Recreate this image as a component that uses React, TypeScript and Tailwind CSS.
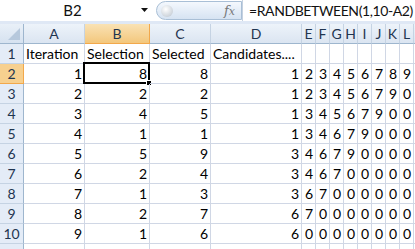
const cols = ["A", "B", "C", "D", "E", "F", "G", "H", "I", "J", "K", "L", ""];

const widths = [
  "w-[61px]",
  "w-[65px]",
  "w-[61px]",
  "w-[91px]",
  "w-[14px]",
  "w-[14px]",
  "w-[14px]",
  "w-[14px]",
  "w-[14px]",
  "w-[14px]",
  "w-[14px]",
  "w-[14px]",
  "w-[14px]",
];

const rows: (string | number)[][] = [
  ["Iteration", "Selection", "Selected", "Candidates....", "", "", "", "", "", "", "", "", ""],
  [1, 8, 8, 1, 2, 3, 4, 5, 6, 7, 8, 9, ""],
  [2, 2, 2, 1, 2, 3, 4, 5, 6, 7, 9, 0, ""],
  [3, 4, 5, 1, 3, 4, 5, 6, 7, 9, 0, 0, ""],
  [4, 1, 1, 1, 3, 4, 6, 7, 9, 0, 0, 0, ""],
  [5, 5, 9, 3, 4, 6, 7, 9, 0, 0, 0, 0, ""],
  [6, 2, 4, 3, 4, 6, 7, 0, 0, 0, 0, 0, ""],
  [7, 1, 3, 3, 6, 7, 0, 0, 0, 0, 0, 0, ""],
  [8, 2, 7, 6, 7, 0, 0, 0, 0, 0, 0, 0, ""],
  [9, 1, 6, 6, 0, 0, 0, 0, 0, 0, 0, 0, ""],
  ["", "", "", "", "", "", "", "", "", "", "", "", ""],
];

export default function App() {
  return (
    <div className="h-[249px] w-[415px] overflow-hidden bg-[#dfe8f5] font-['Lato','Open_Sans',sans-serif] text-[14px] leading-none text-black">
      {/* formula bar */}
      <div className="flex h-[21px] items-stretch bg-white">
        <div className="flex w-[156px] items-center">
          <span className="flex-1 pl-[4px] text-center text-[15px] text-[#111]">B2</span>
          <svg width="8" height="5" viewBox="0 0 8 5" className="mr-[7px]">
            <path d="M0 0h7L3.5 4z" fill="#111" />
          </svg>
        </div>
        <div className="my-[1px] flex w-[86px] items-center rounded-l-full border border-[#a9bfd6] bg-gradient-to-b from-[#f4f8fd] to-[#d6e3f2] pl-[4px]">
          <div className="h-[12px] w-[12px] rounded-full bg-[radial-gradient(circle_at_40%_35%,#ffffff,#b9c2cc)]" />
          <span className="ml-auto mr-[6px] font-['DejaVu_Serif',serif] text-[13px] italic text-[#777]">
            f<span className="text-[11px]">x</span>
          </span>
        </div>
        <div className="flex min-w-0 flex-1 items-center overflow-hidden whitespace-nowrap border-l border-[#c5d1e0] pl-[6px] text-[14px] tracking-[-0.4px] text-[#111]">
          =RANDBETWEEN(1,10-A2)
        </div>
      </div>
      <div className="h-[3px]" />

      {/* column headers */}
      <div className="flex h-[20px]">
        <div className="relative w-[24px] shrink-0 border-b border-r border-[#9eb6ce] bg-gradient-to-b from-[#e9f0f8] to-[#d6e2f0]">
          <svg width="12" height="12" viewBox="0 0 12 12" className="absolute bottom-[3px] right-[3px]">
            <path d="M12 0V12H0z" fill="#b6c8dc" />
          </svg>
        </div>
        {cols.map((c, i) => (
          <div
            key={i}
            className={`${widths[i]} flex shrink-0 items-center justify-center border-r border-b ${
              c === "B"
                ? "border-[#f2a84b] bg-gradient-to-b from-[#f9e2b4] to-[#f3c77c]"
                : "border-[#c5d3e3] border-b-[#9eb6ce] bg-gradient-to-b from-[#edf3fa] to-[#dbe5f1]"
            } text-[#1f3550]`}
          >
            {c}
          </div>
        ))}
      </div>

      {/* rows */}
      {rows.map((r, ri) => (
        <div key={ri} className="flex h-[20px] bg-white">
          <div
            className={`flex w-[24px] shrink-0 items-center justify-center border-r border-b ${
              ri === 1
                ? "border-[#f2a84b] bg-[#f7d08f]"
                : "border-[#c5d3e3] border-r-[#9eb6ce] bg-[#e4ecf7]"
            } text-[#1f3550]`}
          >
            {ri < 10 ? ri + 1 : ""}
          </div>
          {r.map((v, ci) => (
            <div
              key={ci}
              className={`${widths[ci]} relative flex shrink-0 items-center overflow-visible whitespace-nowrap border-r border-b border-[#d0d7e5] ${
                typeof v === "number" ? "justify-end pr-[2px]" : "justify-start pl-[2px]"
              }`}
            >
              {v}
              {ri === 1 && ci === 1 && (
                <div className="absolute -left-[2px] -top-[2px] h-[22px] w-[67px] border-2 border-black">
                  <div className="absolute -bottom-[4px] -right-[4px] h-[6px] w-[6px] border border-white bg-black" />
                </div>
              )}
            </div>
          ))}
        </div>
      ))}
    </div>
  );
}
